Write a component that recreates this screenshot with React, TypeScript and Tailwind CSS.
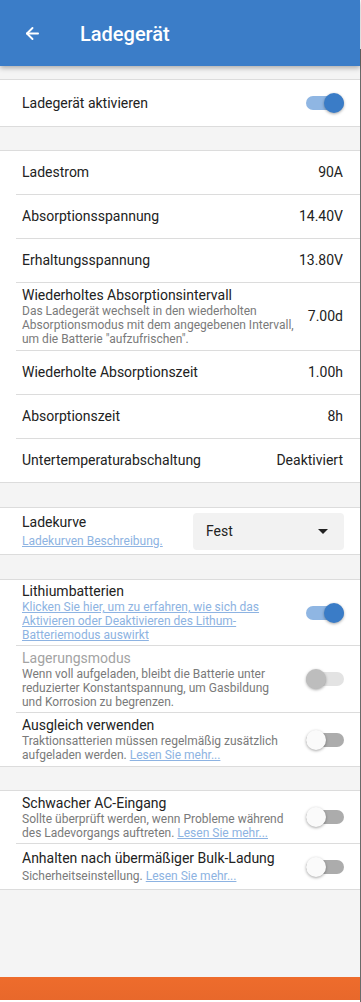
import { ArrowLeft } from "lucide-react";

type ValueRow = { label: string; value: string; desc?: string };

const valueRows: ValueRow[] = [
  { label: "Ladestrom", value: "90A" },
  { label: "Absorptionsspannung", value: "14.40V" },
  { label: "Erhaltungsspannung", value: "13.80V" },
  {
    label: "Wiederholtes Absorptionsintervall",
    value: "7.00d",
    desc: 'Das Ladegerät wechselt in den wiederholten Absorptionsmodus mit dem angegebenen Intervall, um die Batterie "aufzufrischen".',
  },
  { label: "Wiederholte Absorptionszeit", value: "1.00h" },
  { label: "Absorptionszeit", value: "8h" },
  { label: "Untertemperaturabschaltung", value: "Deaktiviert" },
];

const Toggle = ({ on, disabled }: { on?: boolean; disabled?: boolean }) => {
  const track = disabled ? "bg-[#e3e3e3]" : on ? "bg-[#8fb6e3]" : "bg-[#acacac]";
  const knob = disabled
    ? "bg-[#bdbdbd]"
    : on
      ? "bg-[#3a7cc7] ml-auto"
      : "bg-[#fafafa]";
  return (
    <div className="relative w-[38px] h-5 flex items-center shrink-0">
      <div className={`absolute left-0 right-0 h-[14px] rounded-full ${track}`} />
      <div
        className={`relative w-5 h-5 rounded-full shadow-[0_1px_3px_rgba(0,0,0,0.35)] ${knob}`}
      />
    </div>
  );
};

const Link = ({ children }: { children: React.ReactNode }) => (
  <span className="text-[#8db3e2] underline">{children}</span>
);

export default function App() {
  return (
    <div
      className="h-[1002px] overflow-hidden flex bg-white"
      style={{ fontFamily: "Roboto, 'Liberation Sans', sans-serif" }}
    >
      <div className="w-[360px] flex flex-col bg-[#f4f4f4] text-[14px] text-[#222]">
        <header className="h-[66px] shrink-0 bg-[#3b7dc8] flex items-center text-white shadow-[0_2px_5px_rgba(0,0,0,0.3)] relative z-10">
          <ArrowLeft className="ml-[23px] w-[19px] h-[19px] mt-[1px]" strokeWidth={2.4} />
          <h1 className="ml-[38px] text-[20px] font-medium mt-[1px]">Ladegerät</h1>
        </header>

        <div className="mt-[13px] bg-white border-y border-[#dcdcdc] h-[48px] flex items-center pl-[22px] pr-4">
          <span className="flex-1">Ladegerät aktivieren</span>
          <Toggle on />
        </div>

        <section className="mt-[23px] bg-white border-y border-[#dcdcdc]">
          {valueRows.map((r) => (
            <div
              key={r.label}
              className={`ml-4 pl-[6px] pr-[17px] flex items-center gap-2 border-b border-[#dcdcdc] last:border-b-0 ${r.desc ? "h-[68px]" : "h-[44px] last:h-[43px]"}`}
            >
              <div className="flex-1">
                <div className="leading-[17px]">{r.label}</div>
                {r.desc && (
                  <div className="text-[12px] leading-[14px] text-[#7a7a7a]">
                    {r.desc}
                  </div>
                )}
              </div>
              <span className="shrink-0">{r.value}</span>
            </div>
          ))}
        </section>

        <section className="mt-[24px] bg-white border-y border-[#dcdcdc] h-[48px] flex items-center pl-[22px] pr-4">
          <div className="flex-1">
            <div className="leading-[17px]">Ladekurve</div>
            <div className="text-[12px] leading-[16px] mt-[2px]">
              <Link>Ladekurven Beschreibung.</Link>
            </div>
          </div>
          <div className="w-[151px] h-[37px] rounded bg-[#f2f2f2] flex items-center pl-[13px] pr-4">
            <span className="flex-1">Fest</span>
            <svg width="10" height="5" viewBox="0 0 10 5">
              <path d="M0 0h10L5 5z" fill="#222" />
            </svg>
          </div>
        </section>

        <section className="mt-[24px] bg-white border-y border-[#dcdcdc]">
          <div className="ml-4 pl-[6px] pr-4 flex items-center gap-[14px] border-b border-[#dcdcdc] h-[66px]">
            <div className="flex-1">
              <div className="leading-[17px]">Lithiumbatterien</div>
              <div className="text-[12px] leading-[14px]">
                <Link>
                  Klicken Sie hier, um zu erfahren, wie sich das Aktivieren oder
                  Deaktivieren des Lithum-Batteriemodus auswirkt
                </Link>
              </div>
            </div>
            <Toggle on />
          </div>
          <div className="ml-4 pl-[6px] pr-4 flex items-center gap-[14px] border-b border-[#dcdcdc] h-[67px]">
            <div className="flex-1">
              <div className="leading-[17px] text-[#a3a3a3]">Lagerungsmodus</div>
              <div className="text-[12px] leading-[14px] text-[#7a7a7a]">
                Wenn voll aufgeladen, bleibt die Batterie unter reduzierter
                Konstantspannung, um Gasbildung und Korrosion zu begrenzen.
              </div>
            </div>
            <Toggle disabled />
          </div>
          <div className="ml-4 pl-[6px] pr-4 flex items-center gap-[14px] h-[53px]">
            <div className="flex-1">
              <div className="leading-[17px]">Ausgleich verwenden</div>
              <div className="text-[12px] leading-[14px] text-[#7a7a7a]">
                Traktionsatterien müssen regelmäßig zusätzlich aufgeladen werden.{" "}
                <Link>Lesen Sie mehr...</Link>
              </div>
            </div>
            <Toggle />
          </div>
        </section>

        <section className="mt-[23px] bg-white border-y border-[#dcdcdc]">
          <div className="ml-4 pl-[6px] pr-4 flex items-center gap-[14px] border-b border-[#dcdcdc] h-[53px]">
            <div className="flex-1">
              <div className="leading-[17px]">Schwacher AC-Eingang</div>
              <div className="text-[12px] leading-[14px] text-[#7a7a7a]">
                Sollte überprüft werden, wenn Probleme während des Ladevorgangs
                auftreten. <Link>Lesen Sie mehr...</Link>
              </div>
            </div>
            <Toggle />
          </div>
          <div className="ml-4 pl-[6px] pr-4 flex items-center gap-[14px] h-[45px]">
            <div className="flex-1">
              <div className="leading-[17px]">Anhalten nach übermäßiger Bulk-Ladung</div>
              <div className="text-[12px] leading-[14px] text-[#7a7a7a] mt-[2px]">
                Sicherheitseinstellung. <Link>Lesen Sie mehr...</Link>
              </div>
            </div>
            <Toggle />
          </div>
        </section>

        <div className="flex-1" />
        <div className="h-[23px] shrink-0 bg-gradient-to-b from-[#ee6c2c] to-[#e8682b]" />
        <div className="h-[2px] shrink-0 bg-white" />
      </div>
      <div className="w-px flex flex-col">
        <div className="h-[49px] bg-white" />
        <div className="flex-1 bg-[#6a6a6a]" />
      </div>
    </div>
  );
}
